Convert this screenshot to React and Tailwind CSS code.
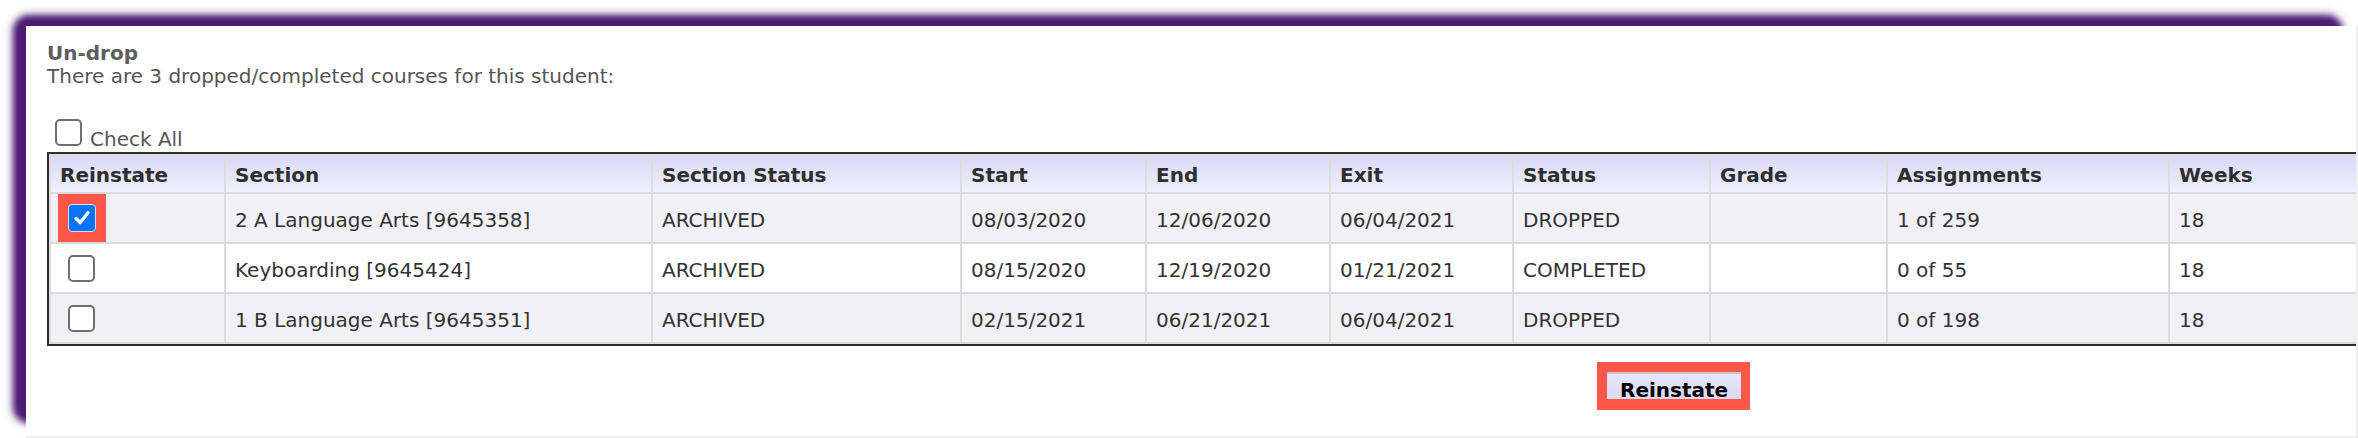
import React from "react";

const headers = ["Reinstate", "Section", "Section Status", "Start", "End", "Exit", "Status", "Grade", "Assignments", "Weeks"];

const rows = [
  { checked: true, cells: ["2 A Language Arts [9645358]", "ARCHIVED", "08/03/2020", "12/06/2020", "06/04/2021", "DROPPED", "", "1 of 259", "18"] },
  { checked: false, cells: ["Keyboarding [9645424]", "ARCHIVED", "08/15/2020", "12/19/2020", "01/21/2021", "COMPLETED", "", "0 of 55", "18"] },
  { checked: false, cells: ["1 B Language Arts [9645351]", "ARCHIVED", "02/15/2021", "06/21/2021", "06/04/2021", "DROPPED", "", "0 of 198", "18"] },
];

function EmptyBox() {
  return <div className="w-[27px] h-[27px] rounded-[5px] border-2 border-[#6f6f6f] bg-white" />;
}

function CheckedBox() {
  return (
    <div className="w-[28px] h-[28px] rounded-[4px] bg-[#0b73f5] border border-[#cfe0fb] flex items-center justify-center">
      <svg width="20" height="20" viewBox="0 0 20 20">
        <path d="M4 10.5 L8.2 14.5 L16 4.8" fill="none" stroke="white" strokeWidth="3.4" strokeLinecap="round" strokeLinejoin="round" />
      </svg>
    </div>
  );
}

export default function App() {
  return (
    <div className="relative w-[2358px] h-[438px] overflow-hidden bg-white pl-[26px] pt-[26px] font-['DejaVu_Sans','Verdana',sans-serif] text-[20px]">
      <div className="absolute left-[13px] top-[15px] w-[2330px] h-[408px] rounded-[16px] bg-[#4d1a74] blur-[3px] shadow-[0_0_10px_rgba(60,20,90,0.35)]" />
      <div className="relative w-[2332px] h-[412px] bg-white border-r-2 border-b-2 border-[#efefef] overflow-hidden pl-[21px] pt-[16px]">
        <div className="font-bold text-[#5e5e5e] leading-[23px]">Un-drop</div>
        <div className="text-[#555] leading-[23px]">There are 3 dropped/completed courses for this student:</div>

        <div className="mt-[31px] h-[33px] flex items-start">
          <div className="ml-[8px]">
            <EmptyBox />
          </div>
          <span className="ml-[8px] mt-[9px] leading-[23px] text-[#555]">Check All</span>
        </div>

        <div className="w-max grid grid-cols-[173px_425px_307px_183px_182px_181px_195px_175px_280px_200px] gap-[2px] bg-[#dcdcdc] p-[2px] border-2 border-[#2e2e2e]">
          {headers.map((h) => (
            <div key={h} className="h-[36px] pt-[8px] px-[9px] leading-[23px] font-bold text-[#2f2f2f] bg-linear-to-b from-[#d9d9f7] to-[#efeffd] whitespace-nowrap">
              {h}
            </div>
          ))}
          {rows.map((r, i) => {
            const bg = i % 2 === 0 ? "bg-[#f0f0f6]" : "bg-white";
            return (
              <React.Fragment key={i}>
                {r.checked ? (
                  <div className={`h-[48px] pl-[7px] ${bg}`}>
                    <div className="w-[48px] h-[48px] bg-[#fd5749] pl-[10px] pt-[10px]">
                      <CheckedBox />
                    </div>
                  </div>
                ) : (
                  <div className={`h-[48px] pl-[17px] pt-[11px] ${bg}`}>
                    <EmptyBox />
                  </div>
                )}
                {r.cells.map((c, j) => (
                  <div key={j} className={`h-[48px] pt-[15px] px-[9px] leading-[23px] text-[#333] whitespace-nowrap ${bg}`}>
                    {c}
                  </div>
                ))}
              </React.Fragment>
            );
          })}
        </div>

        <div className="mt-[16px] ml-[1550px] w-[153px] h-[48px] bg-[#fd5749] pl-[10px] pt-[10px]">
          <div className="w-[134px] h-[27px] border-t-2 border-[#c8c8c8] bg-linear-to-b from-[#e6e6fb] to-[#d9d9f5] pl-[13px] pt-[7px] leading-[18px] font-bold text-black">
            Reinstate
          </div>
        </div>
      </div>
    </div>
  );
}
